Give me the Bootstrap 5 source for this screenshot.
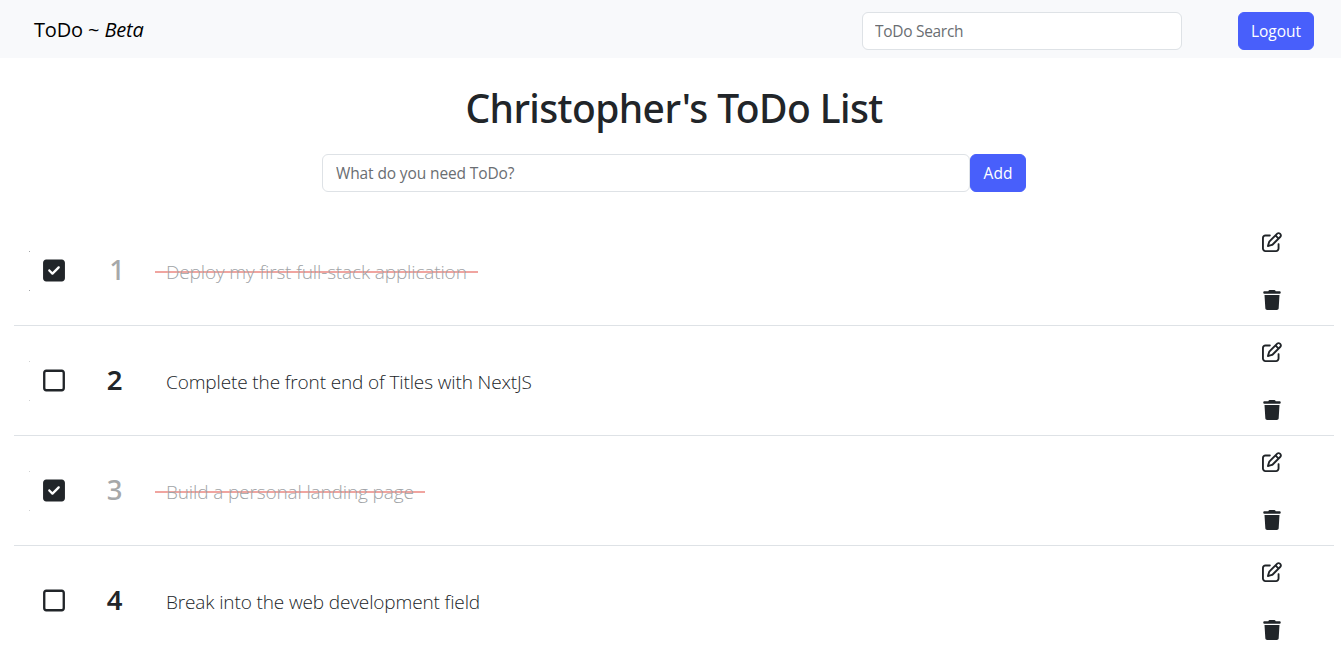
<!DOCTYPE html>
<html lang="en">
<head>
<meta charset="utf-8">
<meta name="viewport" content="width=device-width, initial-scale=1">
<title>ToDo ~ Beta</title>
<link href="https://cdn.jsdelivr.net/npm/bootstrap@5.3.0/dist/css/bootstrap.min.css" rel="stylesheet">
<style>
body{font-family:"Open Sans","Noto Sans",sans-serif;color:#212529;overflow:hidden}
.top-bar{height:57.5px;padding:12px 27px 0 34px;background:#f8f9fb}
.brand-name{font-size:20px;line-height:36px;color:#000;letter-spacing:-.15px}
.form-control{height:38px;font-size:15.5px;letter-spacing:-.12px;border-color:#dee2e6;color:#212529}
.form-control::placeholder{color:#6a6e72;opacity:1}
.search-box::placeholder{letter-spacing:-.3px}
.btn-brand,.btn-brand:hover{background:#485ffb;color:#fff;border-color:#485ffb;height:38px;font-size:15.5px;padding:7px 0 5px}
.search-box{width:320px;margin-right:56px}
.btn-logout{width:76px}
.btn-add{width:56px}
.page-title{font-family:"Noto Sans","Open Sans",sans-serif;font-size:39px;font-weight:500;line-height:48px;letter-spacing:-.6px;margin:26px 0 22px;padding-left:7px}
.add-form{width:704px;margin-left:322px}
.add-form .form-control{width:648px;padding-left:13px}
.todo-list{margin:24px 7px 0 14px}
.todo-row{height:110px;border-bottom:1px solid #dee2e6}
.todo-row:last-child{border-bottom-color:transparent}
.edge-marks{width:1px;height:40px;margin:1px 0 0 15px;border-top:1px solid #a5a8ab;border-bottom:1px solid #a5a8ab}
.faint{opacity:.5}
.check-icon{width:22px;height:25px;margin-left:13px}
.row-number{font-family:"Noto Sans","Open Sans",sans-serif;width:60px;margin-left:19.5px;font-size:27.5px;font-weight:600;line-height:34px}
.digit-one{padding-left:5px}
.todo-text{font-size:19px;font-weight:300;line-height:28px;letter-spacing:-.13px;padding:0 11px;margin:3px 0 0 10.5px}
.is-done .row-number{font-weight:500;color:#a6a8a9}
.is-done .todo-text{color:#a0a3a6;background:linear-gradient(#f0a5a0,#f0a5a0) 0 13px/100% 2px no-repeat}
.row-actions{margin-right:52px;gap:38px;padding-top:2px}
.row-actions svg{display:block;height:20px;width:20px}
</style>
</head>
<body>
<svg width="0" height="0" class="position-absolute" aria-hidden="true">
<symbol id="edit" viewBox="0 0 512 512"><path d="M441 58.9L453.1 71c9.4 9.4 9.4 24.6 0 33.9L424 134.1 377.9 88 407 58.9c9.4-9.4 24.6-9.4 33.9 0zM209.8 256.2L344 121.9 390.1 168 255.8 302.2c-2.9 2.9-6.5 5-10.4 6.1l-58.5 16.7 16.7-58.5c1.1-3.9 3.2-7.5 6.1-10.4zM373.1 25L175.8 222.2c-8.7 8.7-15 19.4-18.3 31.1l-28.6 100c-2.4 8.4-.1 17.4 6.1 23.6s15.2 8.5 23.6 6.1l100-28.6c11.8-3.4 22.5-9.7 31.1-18.3L487 138.9c28.1-28.1 28.1-73.7 0-101.8L474.9 25C446.8-3.1 401.2-3.1 373.1 25zM88 64C39.4 64 0 103.4 0 152V424c0 48.6 39.4 88 88 88H360c48.6 0 88-39.4 88-88V312c0-13.3-10.7-24-24-24s-24 10.7-24 24V424c0 22.1-17.9 40-40 40H88c-22.1 0-40-17.9-40-40V152c0-22.1 17.9-40 40-40H200c13.3 0 24-10.7 24-24s-10.7-24-24-24H88z"/></symbol>
<symbol id="trash" viewBox="0 0 448 512"><path d="M135.2 17.7L128 32H32C14.3 32 0 46.3 0 64S14.3 96 32 96H416c17.7 0 32-14.3 32-32s-14.3-32-32-32H320l-7.2-14.3C307.4 6.8 296.3 0 284.2 0H163.8c-12.1 0-23.2 6.8-28.6 17.7zM416 128H32L53.2 467c1.6 25.3 22.6 45 47.9 45H346.9c25.3 0 46.3-19.7 47.9-45L416 128z"/></symbol>
<symbol id="checked" viewBox="0 0 448 512"><path d="M64 32C28.700 32 0 60.700 0 96V416c0 35.300 28.700 64 64 64H384c35.300 0 64-28.700 64-64V96c0-35.300-28.700-64-64-64H64zM337 209L209 337c-9.400 9.400-24.600 9.400-33.900 0l-64-64c-9.400-9.400-9.400-24.600 0-33.900s24.600-9.400 33.900 0l47 47L303 175c9.400-9.400 24.600-9.400 33.900 0s9.400 24.600 0 33.900z"/></symbol>
<symbol id="unchecked" viewBox="0 0 448 512"><path d="M384 80c8.800 0 16 7.200 16 16V416c0 8.800-7.200 16-16 16H64c-8.800 0-16-7.200-16-16V96c0-8.800 7.200-16 16-16H384zM64 32C28.700 32 0 60.700 0 96V416c0 35.300 28.700 64 64 64H384c35.300 0 64-28.700 64-64V96c0-35.300-28.700-64-64-64H64z"/></symbol>
</svg>

<nav class="top-bar d-flex align-items-start">
  <span class="brand-name me-auto">ToDo ~ <em>Beta</em></span>
  <input class="form-control search-box" type="search" placeholder="ToDo Search" aria-label="Search">
  <button class="btn btn-brand btn-logout">Logout</button>
</nav>

<main>
  <h1 class="page-title text-center">Christopher's ToDo List</h1>
  <form class="add-form d-flex">
    <input class="form-control" placeholder="What do you need ToDo?" aria-label="New item">
    <button type="button" class="btn btn-brand btn-add">Add</button>
  </form>

  <div class="todo-list">
    <div class="todo-row is-done d-flex align-items-center">
      <span class="edge-marks"></span>
      <svg class="check-icon" fill="#212529"><use href="#checked"/></svg>
      <span class="row-number digit-one text-center">1</span>
      <span class="todo-text">Deploy my first full-stack application</span>
      <div class="row-actions ms-auto d-flex flex-column"><svg fill="#212529"><use href="#edit"/></svg><svg fill="#212529"><use href="#trash"/></svg></div>
    </div>
    <div class="todo-row d-flex align-items-center">
      <span class="edge-marks faint"></span>
      <svg class="check-icon" fill="#212529"><use href="#unchecked"/></svg>
      <span class="row-number text-center">2</span>
      <span class="todo-text">Complete the front end of Titles with NextJS</span>
      <div class="row-actions ms-auto d-flex flex-column"><svg fill="#212529"><use href="#edit"/></svg><svg fill="#212529"><use href="#trash"/></svg></div>
    </div>
    <div class="todo-row is-done d-flex align-items-center">
      <span class="edge-marks faint"></span>
      <svg class="check-icon" fill="#212529"><use href="#checked"/></svg>
      <span class="row-number text-center">3</span>
      <span class="todo-text">Build a personal landing page</span>
      <div class="row-actions ms-auto d-flex flex-column"><svg fill="#212529"><use href="#edit"/></svg><svg fill="#212529"><use href="#trash"/></svg></div>
    </div>
    <div class="todo-row d-flex align-items-center">
      <span class="edge-marks invisible"></span>
      <svg class="check-icon" fill="#212529"><use href="#unchecked"/></svg>
      <span class="row-number text-center">4</span>
      <span class="todo-text">Break into the web development field</span>
      <div class="row-actions ms-auto d-flex flex-column"><svg fill="#212529"><use href="#edit"/></svg><svg fill="#212529"><use href="#trash"/></svg></div>
    </div>
  </div>
</main>
<script src="https://cdn.jsdelivr.net/npm/bootstrap@5.3.0/dist/js/bootstrap.bundle.min.js"></script>
</body>
</html>
